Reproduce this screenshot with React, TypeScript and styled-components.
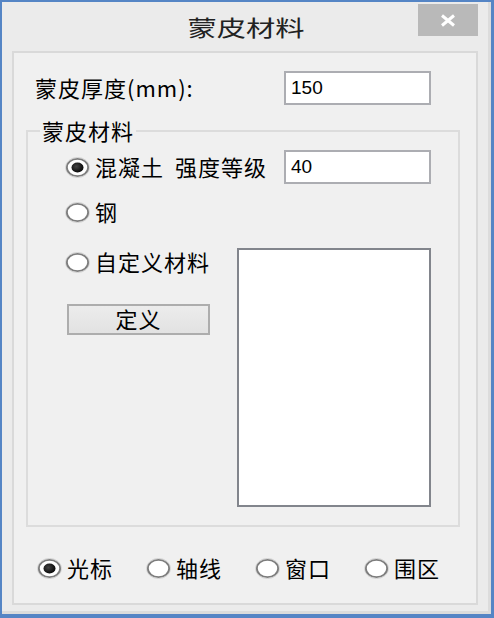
import React from 'react';
import styled, { createGlobalStyle } from 'styled-components';

const GlobalStyle = createGlobalStyle`
  html, body {
    margin: 0;
    padding: 0;
    background: #ebebeb;
  }
  body {
    font-family: "Noto Sans CJK SC", "Noto Sans", sans-serif;
    color: #000;
  }
  * {
    box-sizing: border-box;
  }
`;

const Window = styled.div`
  width: 494px;
  height: 618px;
  display: flex;
  flex-direction: column;
  background: #ebebeb;
  border-style: solid;
  border-color: #5585c5;
  border-width: 2px 3px 4px 2px;
  box-shadow: inset -3px -3px 0 #dcdcdc;
`;

const TitleBar = styled.div`
  height: 49px;
  flex: none;
  display: grid;
  grid-template-columns: 60px 1fr 60px;
  padding: 2px 13px 0;
`;

const Title = styled.div`
  grid-column: 2;
  align-self: center;
  justify-self: center;
  font-size: 22px;
  line-height: 24px;
  color: #222;
  transform: scaleX(1.33);
  margin-bottom: 3px;
`;

const CloseButton = styled.div`
  grid-column: 3;
  align-self: start;
  height: 32px;
  background: #b9b9b9;
  display: flex;
  align-items: center;
  justify-content: center;
`;

const ClientPanel = styled.div`
  flex: 1;
  margin: 0 13px 9px 10px;
  border: 2px solid #d9d9d9;
  background: #f0f0f0;
  display: flex;
  flex-direction: column;
`;

const ThicknessRow = styled.div`
  display: flex;
  align-items: center;
  justify-content: space-between;
  padding: 18px 45px 0 21px;
`;

const Label = styled.span<{ $gap?: number }>`
  font-size: 22px;
  line-height: 28px;
  letter-spacing: 1px;
  white-space: nowrap;
  padding-bottom: 3px;
  margin-left: ${(p) => p.$gap ?? 0}px;
`;

const TextBox = styled.input`
  width: 147px;
  height: 34px;
  border: 2px solid #acadb2;
  background: #fff;
  padding: 0 5px;
  font-family: "Liberation Sans", Arial, sans-serif;
  font-size: 19px;
  color: #000;
  outline: none;
  margin-left: auto;
`;

const Group = styled.fieldset`
  margin: 14px 16px 0 12px;
  border: 2px solid #dcdcdc;
  padding: 7px 27px 18px 0;
  min-width: 0;
`;

const Legend = styled.legend`
  margin-left: 12px;
  padding: 0 2px 2px;
  font-size: 22px;
  line-height: 22px;
  letter-spacing: 1px;
`;

const GroupBody = styled.div`
  padding-left: 37px;
  display: flex;
  flex-direction: column;
`;

const OptionRow = styled.div<{ $top?: number; $height?: number }>`
  display: flex;
  align-items: center;
  height: ${(p) => p.$height ?? 34}px;
  margin-top: ${(p) => p.$top ?? 0}px;
`;

const CustomArea = styled.div`
  display: grid;
  grid-template-columns: 1fr 194px;
  margin-top: 19px;
`;

const LeftColumn = styled.div`
  display: flex;
  flex-direction: column;
  align-items: flex-start;
`;

const PushButton = styled.button`
  margin: 28px 0 0 2px;
  width: 143px;
  height: 31px;
  border: 2px solid #adadad;
  background: linear-gradient(#ececec, #e2e2e2);
  font-family: "Noto Sans CJK SC", sans-serif;
  font-size: 22px;
  line-height: 24px;
  letter-spacing: 1px;
  color: #000;
  padding: 0 0 3px;
`;

const ListBox = styled.div`
  height: 259px;
  border: 2px solid #82858c;
  background: #fff;
`;

const PickRow = styled.div`
  display: grid;
  grid-template-columns: repeat(4, 109px);
  align-items: center;
  height: 28px;
  margin-top: 26px;
  padding-left: 23px;
`;

const RadioItem = styled.label`
  display: flex;
  align-items: center;
  gap: 5px;
`;

const RadioMark = ({ checked }: { checked?: boolean }) => (
  <svg width="25" height="21" viewBox="0 0 25 21">
    <defs>
      <radialGradient id="dot" cx="40%" cy="40%" r="60%">
        <stop offset="0%" stopColor="#444" />
        <stop offset="100%" stopColor="#0a0a0a" />
      </radialGradient>
    </defs>
    <ellipse cx="12.5" cy="10.5" rx="12" ry="10" fill="#fff" stroke="#cfcfcf" strokeWidth="1" />
    <ellipse cx="12.5" cy="10.5" rx="10.6" ry="8.7" fill="#fff" stroke="#7d7d7d" strokeWidth="1.8" />
    {checked && <ellipse cx="12.5" cy="10.5" rx="6" ry="5" fill="url(#dot)" />}
  </svg>
);

const Radio = ({ checked, children }: { checked?: boolean; children: React.ReactNode }) => (
  <RadioItem>
    <RadioMark checked={checked} />
    <Label>{children}</Label>
  </RadioItem>
);

export default function App() {
  return (
    <>
      <GlobalStyle />
      <Window>
        <TitleBar>
          <Title>蒙皮材料</Title>
          <CloseButton>
            <svg width="16" height="13" viewBox="0 0 16 13">
              <path d="M2 1.5 L14 11.5 M14 1.5 L2 11.5" stroke="#fff" strokeWidth="3" />
            </svg>
          </CloseButton>
        </TitleBar>
        <ClientPanel>
          <ThicknessRow>
            <Label>蒙皮厚度(mm):</Label>
            <TextBox readOnly value="150" />
          </ThicknessRow>
          <Group>
            <Legend>蒙皮材料</Legend>
            <GroupBody>
              <OptionRow>
                <Radio checked>混凝土</Radio>
                <Label $gap={11}>强度等级</Label>
                <TextBox readOnly value="40" />
              </OptionRow>
              <OptionRow $top={11}>
                <Radio>钢</Radio>
              </OptionRow>
              <CustomArea>
                <LeftColumn>
                  <OptionRow $height={28}>
                    <Radio>自定义材料</Radio>
                  </OptionRow>
                  <PushButton>定义</PushButton>
                </LeftColumn>
                <ListBox />
              </CustomArea>
            </GroupBody>
          </Group>
          <PickRow>
            <Radio checked>光标</Radio>
            <Radio>轴线</Radio>
            <Radio>窗口</Radio>
            <Radio>围区</Radio>
          </PickRow>
        </ClientPanel>
      </Window>
    </>
  );
}
